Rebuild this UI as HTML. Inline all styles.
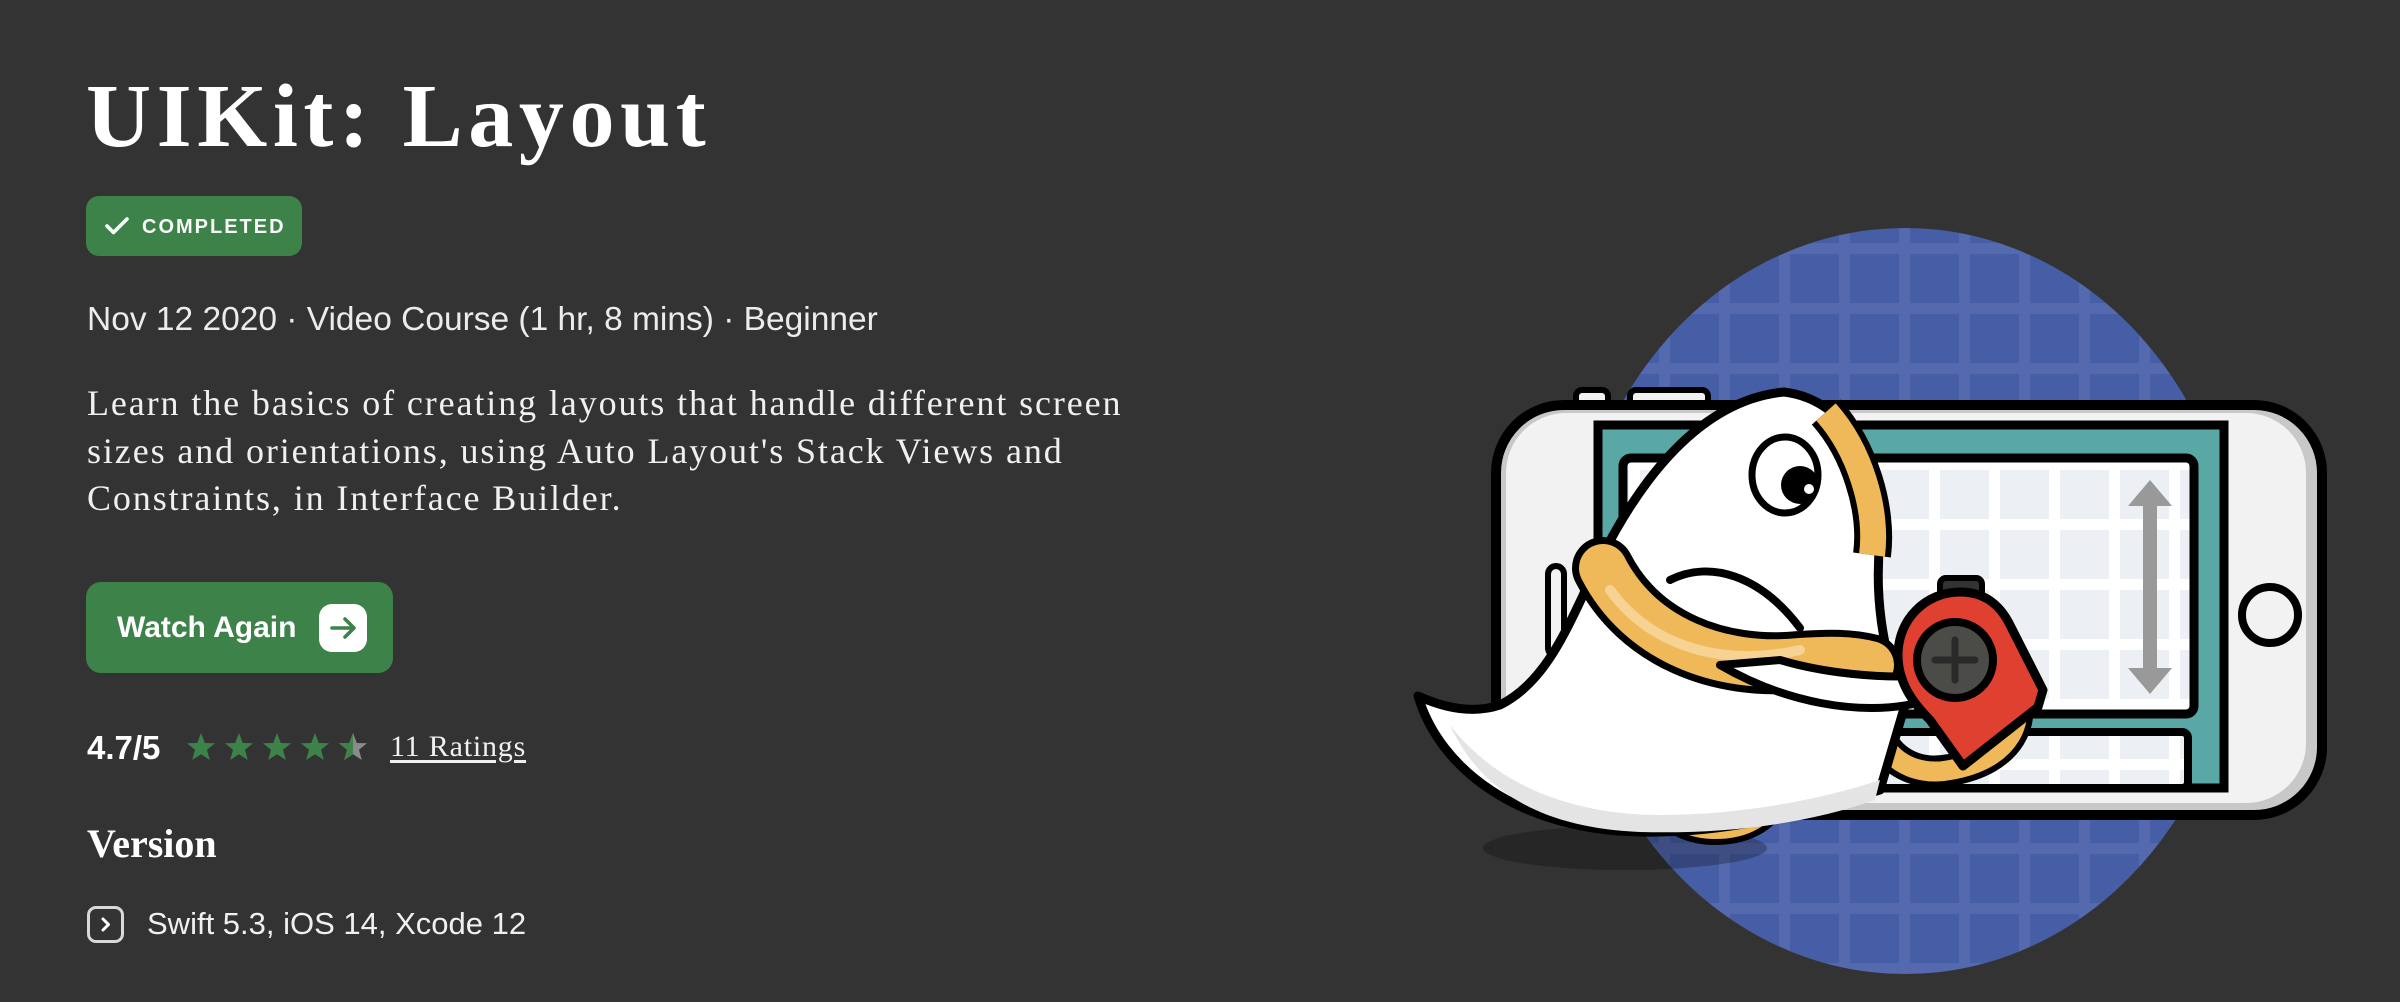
<!DOCTYPE html>
<html><head><meta charset="utf-8">
<style>
*{margin:0;padding:0;box-sizing:border-box}
html,body{width:2400px;height:1002px;overflow:hidden;background:#333333}
body{position:relative;font-family:"Liberation Sans",sans-serif;color:#fff}
.a{position:absolute;white-space:nowrap;line-height:1}
.serif{font-family:"Liberation Serif",serif}
</style></head><body>
<div class="a serif" style="left:86px;top:72px;font-size:90px;font-weight:bold;letter-spacing:5.6px">UIKit: Layout</div>

<div class="a" style="left:86px;top:196px;width:216px;height:60px;background:#3d8349;border-radius:13px"></div>
<svg class="a" style="left:104px;top:216px" width="26" height="20" viewBox="0 0 26 20"><path d="M3 10 L9.5 16.5 L23 3" fill="none" stroke="#fff" stroke-width="3.6" stroke-linecap="round" stroke-linejoin="round"/></svg>
<div class="a" style="left:142px;top:217px;font-size:20px;font-weight:bold;letter-spacing:2px;color:#fafafa">COMPLETED</div>

<div class="a" style="left:87px;top:303px;font-size:33.5px;color:#ececec">Nov 12 2020 · Video Course (1 hr, 8 mins) · Beginner</div>

<div class="a serif" style="left:87px;top:380px;font-size:36px;line-height:47.5px;color:#f0f0f0;letter-spacing:1.9px">Learn the basics of creating layouts that handle different screen<br>sizes and orientations, using Auto Layout's Stack Views and<br>Constraints, in Interface Builder.</div>

<div class="a" style="left:86px;top:582px;width:307px;height:91px;background:#3d8349;border-radius:15px"></div>
<div class="a" style="left:117px;top:613px;font-size:30px;font-weight:bold">Watch Again</div>
<div class="a" style="left:319px;top:604px;width:48px;height:48px;background:#fff;border-radius:13px"></div>
<svg class="a" style="left:319px;top:604px" width="48" height="48" viewBox="0 0 48 48"><path d="M13 24 H35 M26 15 L35 24 L26 33" fill="none" stroke="#3d8349" stroke-width="3.6" stroke-linecap="round" stroke-linejoin="round"/></svg>

<div class="a" style="left:87px;top:731px;font-size:33px;font-weight:bold">4.7/5</div>
<svg class="a" style="left:186px;top:732px" width="190" height="32" viewBox="0 0 190 32">
<defs><clipPath id="hc"><rect x="0" y="0" width="15" height="32"/></clipPath></defs>
<g fill="#3d8349">
<path d="M15 1 L18.8 11 L29 11.3 L21 17.8 L23.8 28 L15 22.2 L6.2 28 L9 17.8 L1 11.3 L11.2 11 Z"/>
<path transform="translate(38 0)" d="M15 1 L18.8 11 L29 11.3 L21 17.8 L23.8 28 L15 22.2 L6.2 28 L9 17.8 L1 11.3 L11.2 11 Z"/>
<path transform="translate(76 0)" d="M15 1 L18.8 11 L29 11.3 L21 17.8 L23.8 28 L15 22.2 L6.2 28 L9 17.8 L1 11.3 L11.2 11 Z"/>
<path transform="translate(114 0)" d="M15 1 L18.8 11 L29 11.3 L21 17.8 L23.8 28 L15 22.2 L6.2 28 L9 17.8 L1 11.3 L11.2 11 Z"/>
</g>
<g transform="translate(152 0)">
<path fill="#8a8a8a" d="M15 1 L18.8 11 L29 11.3 L21 17.8 L23.8 28 L15 22.2 L6.2 28 L9 17.8 L1 11.3 L11.2 11 Z"/>
<path fill="#3d8349" clip-path="url(#hc)" d="M15 1 L18.8 11 L29 11.3 L21 17.8 L23.8 28 L15 22.2 L6.2 28 L9 17.8 L1 11.3 L11.2 11 Z"/>
</g>
</svg>
<div class="a serif" style="left:390px;top:732px;font-size:30px;letter-spacing:0.8px;text-decoration:underline;text-underline-offset:4px;color:#f0f0f0">11 Ratings</div>

<div class="a serif" style="left:87px;top:824px;font-size:40px;font-weight:bold">Version</div>

<div class="a" style="left:87px;top:906px;width:37px;height:37px;border:3px solid #d8d8d8;border-radius:9px"></div>
<svg class="a" style="left:87px;top:906px" width="37" height="37" viewBox="0 0 37 37"><path d="M16 13 L21.5 18.5 L16 24" fill="none" stroke="#fff" stroke-width="3" stroke-linecap="round" stroke-linejoin="round"/></svg>
<div class="a" style="left:147px;top:908px;font-size:31px;color:#f0f0f0">Swift 5.3, iOS 14, Xcode 12</div>

<svg class="a" style="left:0;top:0" width="2400" height="1002" viewBox="0 0 2400 1002">
<defs>
<pattern id="bg" patternUnits="userSpaceOnUse" x="1790" y="314" width="60" height="60">
<rect width="60" height="60" fill="#5569ae"/><rect x="0" y="0" width="49" height="49" fill="#465ea6"/></pattern>
<pattern id="wg" patternUnits="userSpaceOnUse" x="1640" y="470" width="60" height="60">
<rect width="60" height="60" fill="#ffffff"/><rect x="0" y="0" width="49" height="49" fill="#eceff3"/></pattern>
</defs>
<ellipse cx="1905" cy="601" rx="334" ry="373" fill="url(#bg)"/>
<rect x="1576" y="390" width="32" height="20" rx="6" fill="#f2f2f2" stroke="#000" stroke-width="6"/>
<rect x="1630" y="390" width="78" height="20" rx="6" fill="#f2f2f2" stroke="#000" stroke-width="6"/>
<rect x="1496" y="405" width="826" height="410" rx="68" fill="#c8c8c8" stroke="#000" stroke-width="10"/>
<rect x="1506" y="413" width="800" height="390" rx="60" fill="#f2f2f2"/>
<rect x="1598" y="425" width="626" height="363" fill="#5aa8a6" stroke="#000" stroke-width="9"/>
<rect x="1623" y="458" width="571" height="256" rx="8" fill="url(#wg)" stroke="#000" stroke-width="9"/>
<rect x="1600" y="732" width="588" height="56" rx="6" fill="url(#wg)" stroke="#000" stroke-width="8"/>
<path d="M2150 480 L2128 506 H2143 V668 H2128 L2150 694 L2172 668 H2157 V506 H2172 Z" fill="#999"/>
<circle cx="2270" cy="615" r="28" fill="#f2f2f2" stroke="#000" stroke-width="8"/>
<rect x="1548" y="566" width="16" height="90" rx="8" fill="#f2f2f2" stroke="#000" stroke-width="6"/>
<ellipse cx="1625" cy="848" rx="142" ry="22" fill="rgba(0,0,0,0.25)"/>
<path d="M1650 720 C1645 790 1670 825 1715 825 C1765 825 1785 790 1778 740" fill="none" stroke="#000" stroke-width="40"/>
<path d="M1650 720 C1645 790 1670 825 1715 825 C1765 825 1785 790 1778 740" fill="none" stroke="#efb95a" stroke-width="28"/>
<path d="M1880 680 C1860 740 1900 780 1950 770 C2010 760 2030 720 2010 680" fill="none" stroke="#000" stroke-width="32"/>
<path d="M1880 680 C1860 740 1900 780 1950 770 C2010 760 2030 720 2010 680" fill="none" stroke="#efb95a" stroke-width="20"/>
<path d="M1784 392 C1700 400 1640 480 1600 560 C1570 620 1550 680 1500 705 C1470 715 1440 706 1418 696 C1440 770 1520 830 1640 832 C1720 834 1800 815 1880 790 L1905 705 C1880 650 1875 590 1880 540 C1882 470 1850 400 1784 392 Z" fill="#fff" stroke="#000" stroke-width="9" stroke-linejoin="round"/>
<path d="M1450 725 C1500 790 1580 815 1660 815 C1740 815 1820 800 1880 780 L1875 800 C1800 826 1720 834 1640 832 C1540 828 1480 790 1450 725Z" fill="#e4e4e4"/>
<path d="M1826 412 C1860 450 1878 510 1872 555" fill="none" stroke="#000" stroke-width="38"/>
<path d="M1826 412 C1860 450 1878 510 1872 555" fill="none" stroke="#efb95a" stroke-width="26"/>
<ellipse cx="1785" cy="475" rx="33" ry="38" fill="#fff" stroke="#000" stroke-width="7"/>
<circle cx="1800" cy="485" r="19" fill="#000"/>
<circle cx="1809" cy="489" r="5" fill="#fff"/>
<path d="M1603 568 C1640 640 1720 670 1800 662 C1830 660 1850 660 1870 665" fill="none" stroke="#000" stroke-width="62" stroke-linecap="round"/>
<path d="M1603 568 C1640 640 1720 670 1800 662 C1830 660 1850 660 1870 665" fill="none" stroke="#efb95a" stroke-width="48" stroke-linecap="round"/>
<path d="M1610 590 C1650 645 1720 668 1800 650" fill="none" stroke="#f6d393" stroke-width="10" stroke-linecap="round"/>
<path d="M1670 580 C1710 560 1760 575 1800 628" fill="none" stroke="#000" stroke-width="8" stroke-linecap="round"/>
<path d="M1720 665 C1780 700 1860 720 1930 700 L1935 675 C1880 680 1820 672 1780 660 Z" fill="#fff" stroke="#000" stroke-width="8" stroke-linejoin="round"/>
<rect x="1940" y="578" width="42" height="20" rx="6" fill="#333" stroke="#000" stroke-width="6"/>
<path d="M1960 592 C1925 592 1898 620 1898 655 C1898 680 1910 700 1930 720 L1963 766 L2038 707 L2043 690 L2010 625 C2000 605 1985 592 1960 592 Z" fill="#e04030" stroke="#000" stroke-width="9" stroke-linejoin="round"/>
<circle cx="1955" cy="660" r="38" fill="#4b4b47" stroke="#000" stroke-width="8"/>
<path d="M1955 640 V680 M1935 660 H1975" stroke="#2a2a2a" stroke-width="7" stroke-linecap="round"/>
</svg>
</body></html>
